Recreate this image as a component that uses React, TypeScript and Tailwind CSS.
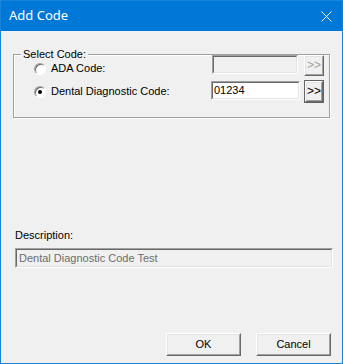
import React from 'react';

const font = { fontFamily: '"Liberation Sans", Arial, sans-serif' };

const Radio: React.FC<{ checked?: boolean; label: string }> = ({ checked, label }) => (
    <div className="flex items-center gap-[5px]">
        <div className="w-[12px] h-[12px] rounded-full border border-t-[#a0a0a0] border-l-[#a0a0a0] border-b-white border-r-white bg-white flex items-center justify-center shadow-[inset_1px_1px_0_#696969]">
            {checked && <div className="w-[4px] h-[4px] rounded-full bg-black" />}
        </div>
        <span className="text-[11px] leading-[13px] text-black">{label}</span>
    </div>
);

const Sunken: React.FC<{ className?: string; bg?: string; children?: React.ReactNode }> = ({ className = '', bg = 'bg-[#f0f0f0]', children }) => (
    <div className={`border border-t-[#a0a0a0] border-l-[#a0a0a0] border-b-white border-r-white ${className}`}>
        <div className={`h-full border border-t-[#696969] border-l-[#696969] border-b-[#e3e3e3] border-r-[#e3e3e3] ${bg} flex items-center px-[1px] text-[11px] leading-[13px]`}>
            {children}
        </div>
    </div>
);

const Raised: React.FC<{ className?: string; children?: React.ReactNode; text?: string; dark?: boolean }> = ({ className = '', children, text = 'text-black', dark }) => (
    <div className={`${dark ? 'border border-[#646464]' : ''} ${className}`}>
        <div className="h-full border border-t-white border-l-white border-b-[#696969] border-r-[#696969]">
            <div className={`h-full border border-t-[#e3e3e3] border-l-[#e3e3e3] border-b-[#a0a0a0] border-r-[#a0a0a0] bg-[#f0f0f0] flex items-center justify-center text-[11px] leading-[13px] ${text}`}>
                {children}
            </div>
        </div>
    </div>
);

export default function App() {
    return (
        <div className="w-[343px] h-[364px] border border-[#1883d7] flex flex-col bg-[#f0f0f0]" style={font}>
            <div className="h-[30px] bg-[#0078d7] flex items-center justify-between pl-[8px] pr-[10px]">
                <span className="text-white text-[13px]" style={{ fontFamily: '"Noto Sans", "Open Sans", sans-serif' }}>Add Code</span>
                <svg width="11" height="11" viewBox="0 0 11 11">
                    <path d="M0.5 0.5 L10.5 10.5 M10.5 0.5 L0.5 10.5" stroke="white" strokeWidth="1" />
                </svg>
            </div>

            <div className="flex-1 flex flex-col px-[12px]">
                <div className="relative mt-[23px] h-[64px] border border-[#a0a0a0] shadow-[inset_1px_1px_0_white,1px_1px_0_white] pr-[5px]">
                    <span className="absolute -top-[7px] left-[7px] px-[2px] bg-[#f0f0f0] text-[11px] leading-[13px] text-black">Select Code:</span>
                    <div className="flex items-center h-[21px]">
                        <div className="pl-[20px] mt-[6px]"><Radio label="ADA Code:" /></div>
                        <Sunken className="ml-auto w-[86px] h-[19px] self-start" />
                        <Raised className="ml-[6px] w-[20px] h-[21px]" text="text-[#a0a0a0] text-[12px]">&gt;&gt;</Raised>
                    </div>
                    <div className="flex items-center h-[23px] mt-[4px]">
                        <div className="pl-[20px]"><Radio checked label="Dental Diagnostic Code:" /></div>
                        <Sunken className="ml-auto w-[89px] h-[19px] self-start mt-[1px]" bg="bg-white">01234</Sunken>
                        <Raised dark className="ml-[4px] w-[20px] h-[23px]" text="text-black text-[12px]">&gt;&gt;</Raised>
                    </div>
                </div>

                <div className="mt-[111px] ml-[2px] text-[11px] leading-[13px] text-black">Description:</div>
                <Sunken className="mt-[6px] ml-[2px] w-[318px] h-[20px]">
                    <span className="text-[#6d6d6d] pl-[1px]">Dental Diagnostic Code Test</span>
                </Sunken>

                <div className="mt-[65px] flex justify-end gap-[15px] mr-[-1px]">
                    <Raised className="w-[75px] h-[23px]">OK</Raised>
                    <Raised className="w-[75px] h-[23px]">Cancel</Raised>
                </div>
            </div>
        </div>
    );
}
